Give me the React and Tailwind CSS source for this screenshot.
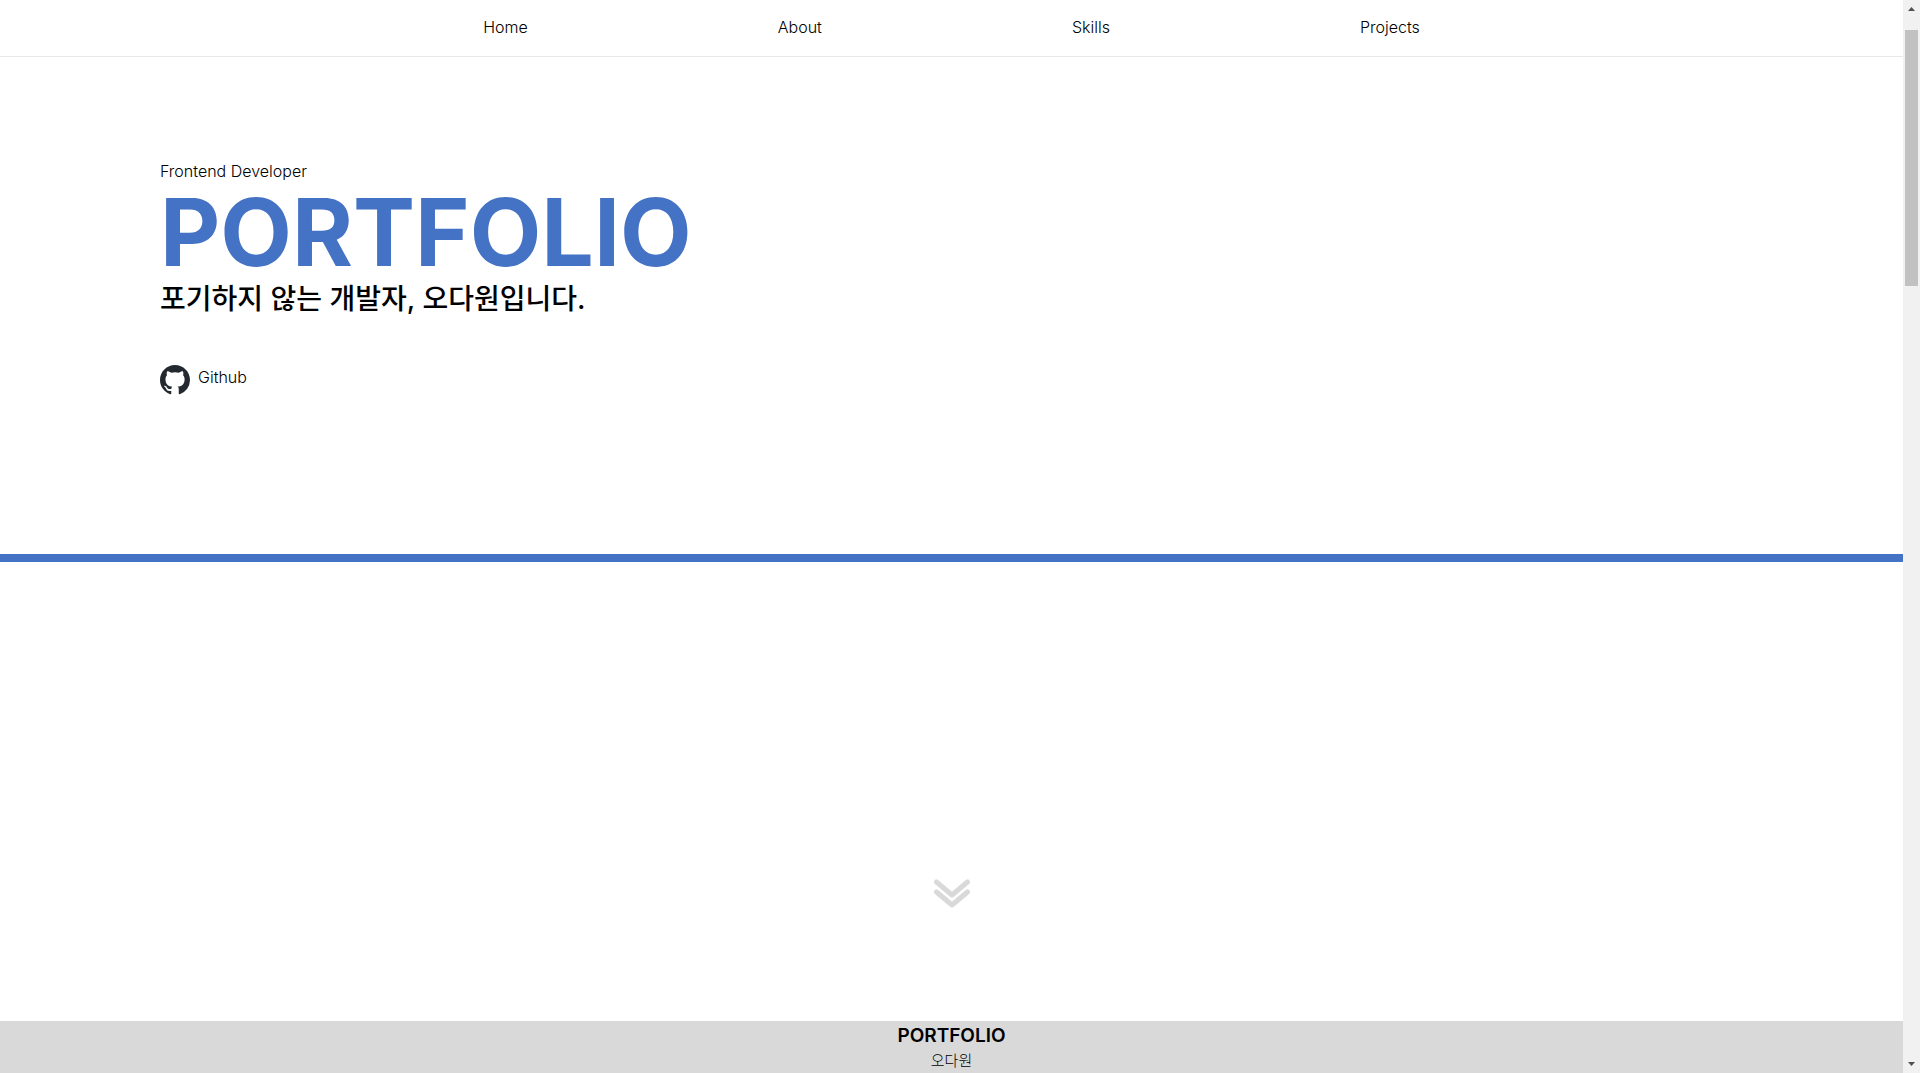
import React from "react";

const links = ["Home", "About", "Skills", "Projects"];

function Scrollbar() {
  return (
    <div aria-hidden="true" className="flex w-[17px] shrink-0 flex-col items-center bg-[#f1f1f1]">
      <svg width="17" height="17" viewBox="0 0 17 17"><path d="M5 11h7L8.500 7z" fill="#505050" /></svg>
      <div className="flex w-full flex-1 flex-col px-[2px] pt-[13px]">
        <div className="h-[256px] bg-[#c1c1c1]" />
      </div>
      <svg width="17" height="17" viewBox="0 0 17 17"><path d="M5 6h7L8.500 10z" fill="#505050" /></svg>
    </div>
  );
}

export default function App() {
  return (
    <div className="flex h-screen bg-white font-['Inter','Noto_Sans_CJK_KR',sans-serif] text-black">
      <div className="flex min-w-0 flex-1 flex-col">
        <header className="h-[57px] shrink-0 border-b border-[#e8e8e8]">
          <nav className="flex h-[54px] items-center justify-center gap-[250px]">
            {links.map((l) => (
              <a key={l} href={"#" + l} className="text-base font-light">{l}</a>
            ))}
          </nav>
        </header>
        <main className="flex flex-1 flex-col">
          <section className="flex h-[505px] flex-col items-start border-b-8 border-[#4472c4] px-40 pt-[102px]">
            <p className="text-base font-light leading-6">Frontend Developer</p>
            <h1 className="text-[93px] font-bold leading-[98px] text-[#4472c4]">PORTFOLIO</h1>
            <h2 className="text-[28px] font-medium leading-9">포기하지 않는 개발자, 오다원입니다.</h2>
            <a href="#github" className="mt-12 flex items-start gap-2 text-base font-light leading-6">
              <svg width="30" height="30" viewBox="0 0 16 16" fill="#24292f"><path d="M8 0C3.580 0 0 3.580 0 8c0 3.540 2.290 6.530 5.470 7.590.4.070.55-.17.55-.38 0-.19-.01-.82-.01-1.490-2.010.37-2.530-.49-2.690-.94-.09-.23-.48-.94-.82-1.130-.28-.15-.68-.52-.01-.53.63-.01 1.080.58 1.230.82.72 1.210 1.870.87 2.330.66.07-.52.28-.87.51-1.070-1.780-.2-3.640-.89-3.640-3.950 0-.87.31-1.590.82-2.150-.08-.2-.36-1.020.08-2.120 0 0 .67-.21 2.200.82.64-.18 1.320-.27 2-.27s1.360.09 2 .27c1.530-1.040 2.200-.82 2.200-.82.44 1.100.16 1.920.08 2.120.51.56.82 1.270.82 2.150 0 3.070-1.870 3.750-3.650 3.950.29.25.54.73.54 1.480 0 1.070-.01 1.930-.01 2.200 0 .21.15.46.55.38A8.010 8.010 0 0 0 16 8c0-4.420-3.580-8-8-8z" /></svg>
              Github
            </a>
          </section>
          <div className="flex flex-1 items-end justify-center pb-28">
            <svg width="38" height="30" viewBox="0 0 38 30" fill="none" stroke="#d9d9d9" strokeWidth="5" strokeLinecap="round" strokeLinejoin="round"><path d="M3.500 3l15.500 13L34.500 3M3.500 13l15.500 13L34.500 13" /></svg>
          </div>
        </main>
        <footer className="flex h-[52px] shrink-0 flex-col items-center bg-[#d9d9d9] pt-px">
          <strong className="text-[19px] font-semibold leading-7">PORTFOLIO</strong>
          <span className="text-[15px] font-light leading-[22px]">오다원</span>
        </footer>
      </div>
      <Scrollbar />
    </div>
  );
}
